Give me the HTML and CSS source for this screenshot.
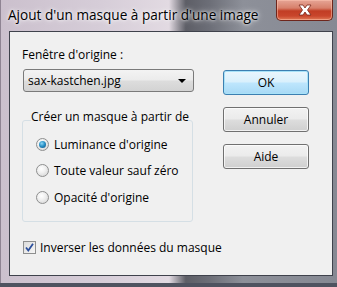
FILE: index.html
```html
<!DOCTYPE html>
<html lang="fr">
<head>
  <meta charset="UTF-8">
  <title>Ajout d'un masque à partir d'une image</title>
  <link rel="stylesheet" href="styles.css">
</head>
<body>
  <div class="window">
    <div class="titlebar">
      <span class="title">Ajout d'un masque à partir d'une image</span>
      <div class="close-btn">
        <svg width="16" height="12" viewBox="0 0 16 12">
          <path d="M2 1 L6 1 L8 4 L10 1 L14 1 L10.5 6 L14 11 L10 11 L8 8 L6 11 L2 11 L5.5 6 Z" fill="#fff" stroke="#7a2418" stroke-width="0.8" stroke-linejoin="round"/>
        </svg>
      </div>
    </div>

    <div class="client">
      <div class="left-col">
        <div class="field-label">Fenêtre d'origine :</div>
        <div class="combo">
          <span>sax-kastchen.jpg</span>
          <span class="combo-arrow"></span>
        </div>

        <fieldset class="group">
          <legend>Créer un masque à partir de</legend>
          <div class="radio-row"><span class="radio checked"></span>Luminance d'origine</div>
          <div class="radio-row"><span class="radio"></span>Toute valeur sauf zéro</div>
          <div class="radio-row"><span class="radio"></span>Opacité d'origine</div>
        </fieldset>

        <div class="check-row">
          <span class="checkbox">
            <svg width="11" height="11" viewBox="0 0 11 11">
              <path d="M2 5.5 L4.3 8.5 L9 1.8" fill="none" stroke="#2b4f9c" stroke-width="1.8"/>
            </svg>
          </span>
          Inverser les données du masque
        </div>
      </div>

      <div class="buttons">
        <div class="btn btn-default">OK</div>
        <div class="btn">Annuler</div>
        <div class="btn">Aide</div>
      </div>
    </div>
  </div>
</body>
</html>
```

FILE: styles.css
```css
body {
  margin: 0;
  padding: 0;
  background-color: #4f5360;
  font-family: "Open Sans", "Noto Sans", sans-serif;
  width: 337px;
  height: 287px;
  overflow: hidden;
}

.window {
  height: 283px;
  box-sizing: border-box;
  padding: 0 4px 7px 8px;
  display: flex;
  flex-direction: column;
  background: linear-gradient(to right, #cbc0cd 0%, #d6cdd8 30%, #e2dae2 50%, #5d5e66 55%, #6c6e77 62%, #8d9099 72%, #868993 100%);
  border-left: 1px solid #8f8493;
}

.titlebar {
  height: 31px;
  display: flex;
  justify-content: space-between;
  align-items: flex-start;
  margin-left: -1px;
}

.title {
  font-size: 13.6px;
  color: #000;
  padding-top: 6px;
  line-height: 18px;
  text-shadow: 0 0 6px #fff, 0 0 3px #fff;
}

.close-btn {
  width: 57px;
  height: 21px;
  box-sizing: border-box;
  border: 1px solid #6e261c;
  border-top: none;
  border-radius: 0 0 5px 5px;
  background: linear-gradient(to bottom, #e6a596 0%, #d7806b 40%, #c13d24 55%, #c9462c 80%, #e07a56 100%);
  box-shadow: inset 0 0 0 1px rgba(255, 200, 180, 0.5);
  display: flex;
  align-items: center;
  justify-content: center;
}

.client {
  flex: 1;
  display: flex;
  background-color: #f0f0f0;
  border: 1px solid #3f424c;
  font-size: 12px;
  color: #000;
}

.left-col {
  width: 172px;
  padding: 15px 0 0 12px;
}

.field-label {
  line-height: 16px;
}

.combo {
  margin: 6px 0 0 1px;
  height: 23px;
  box-sizing: border-box;
  border: 1px solid #7a7a7a;
  border-radius: 3px;
  background: linear-gradient(to bottom, #f3f3f3 0%, #ebebeb 48%, #dddddd 52%, #d3d3d3 100%);
  display: flex;
  align-items: center;
  justify-content: space-between;
  padding: 0 7px 0 4px;
  line-height: 16px;
}

.combo-arrow {
  width: 0;
  height: 0;
  border-left: 4px solid transparent;
  border-right: 4px solid transparent;
  border-top: 4px solid #000;
}

.group {
  margin: 17px 0 0 0;
  padding: 0 0 10px 13px;
  width: 171px;
  min-width: 0;
  border: 1px solid #d5dfe5;
  border-radius: 3px;
  box-sizing: border-box;
}

.group legend {
  padding: 0 0 6px 0;
  margin-left: -5px;
  line-height: 16px;
  white-space: nowrap;
}

.radio-row {
  display: flex;
  align-items: center;
  height: 26.5px;
  white-space: nowrap;
}

.radio {
  width: 13px;
  height: 13px;
  box-sizing: border-box;
  border-radius: 50%;
  border: 1px solid #8e8f8f;
  background: radial-gradient(circle at 40% 35%, #ffffff 0%, #f0f0f0 40%, #cfcfcf 100%);
  margin-right: 5px;
  position: relative;
}

.radio.checked::after {
  content: "";
  position: absolute;
  left: 2px;
  top: 2px;
  width: 7px;
  height: 7px;
  border-radius: 50%;
  background: radial-gradient(circle at 40% 35%, #8fd6f4 0%, #2a93c8 45%, #0c4a7c 100%);
}

.check-row {
  display: flex;
  align-items: center;
  margin: 18px 0 0 1px;
  height: 16px;
  white-space: nowrap;
}

.checkbox {
  width: 13px;
  height: 13px;
  box-sizing: border-box;
  border: 1px solid #8e8f8f;
  background: linear-gradient(135deg, #dcdcdc 0%, #f6f6f6 100%);
  margin-right: 4px;
  display: flex;
  align-items: center;
  justify-content: center;
}

.buttons {
  display: flex;
  flex-direction: column;
  gap: 12px;
  margin: 38px 0 0 29px;
}

.btn {
  width: 86px;
  height: 25px;
  box-sizing: border-box;
  border: 1px solid #707070;
  border-radius: 3px;
  background: linear-gradient(to bottom, #f2f2f2 0%, #ebebeb 48%, #dddddd 52%, #cfcfcf 100%);
  box-shadow: inset 0 0 0 1px rgba(255, 255, 255, 0.7);
  display: flex;
  align-items: center;
  justify-content: center;
  line-height: 16px;
}

.btn-default {
  border-color: #3c7fb1;
  box-shadow: inset 0 0 0 1px #a8e2f8;
  background: linear-gradient(to bottom, #eaf6fd 0%, #d9f0fc 48%, #bee6fd 52%, #a7d9f5 100%);
}
```
